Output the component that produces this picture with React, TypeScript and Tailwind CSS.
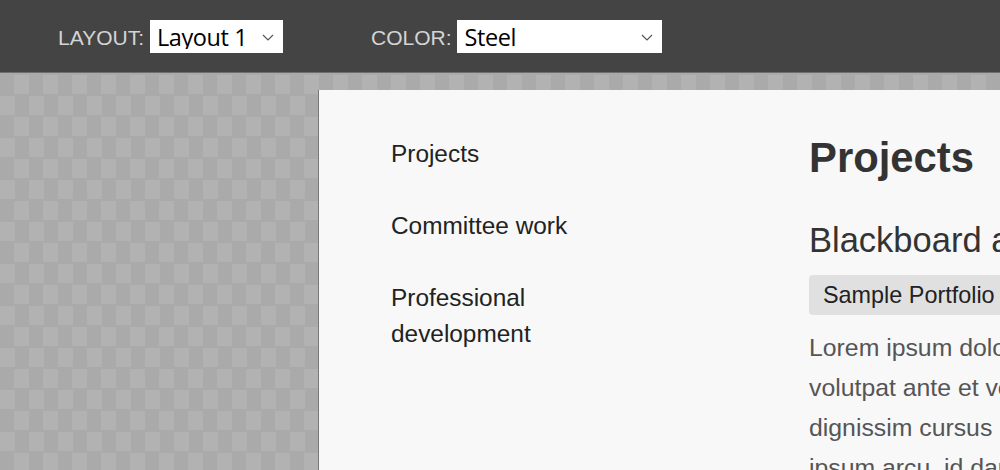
import React from "react";

const navItems = ["Projects", "Committee work", "Professional development"];

const Picker = ({ label, value, options, width }: { label: string; value: string; options: string[]; width: string }) => (
  <label className="flex items-center gap-[6px]">
    <span className="text-[21px] pt-[4px] text-[#d4d4d4]">{label}</span>
    <span className={`relative block h-[33px] ${width}`}>
      <select
        defaultValue={value}
        className="w-full h-full appearance-none bg-white text-black pl-[7px] pt-[3px] text-[23.5px] leading-none outline-none rounded-none font-['Open_Sans',sans-serif] tracking-[-0.4px]"
      >
        {options.map((o) => (
          <option key={o}>{o}</option>
        ))}
      </select>
      <svg className="absolute right-[9px] top-[14px] pointer-events-none" width="12" height="7" viewBox="0 0 12 7" fill="none">
        <path d="M1 1l5 5 5-5" stroke="#555" strokeWidth="1.2" />
      </svg>
    </span>
  </label>
);

export default function App() {
  return (
    <div className="w-[1000px] h-[470px] overflow-hidden font-['Liberation_Sans',Arial,sans-serif] bg-[linear-gradient(180deg,#aaaaaa_2px,transparent_2px),conic-gradient(#b2b2b2_25%,#aaaaaa_0_50%,#b2b2b2_0_75%,#aaaaaa_0)] bg-[length:100%_21px,29px_42px] bg-[position:0_73px,0_73px]">
      <header className="h-[73px] bg-[#444444] border-b border-[#6e6e6e] flex items-center pl-[58px] gap-[88px]">
        <Picker label="LAYOUT:" value="Layout 1" options={["Layout 1", "Layout 2"]} width="w-[133px]" />
        <Picker label="COLOR:" value="Steel" options={["Steel", "Sand", "Forest"]} width="w-[205px]" />
      </header>
      <div className="pt-[17px] pl-[318px]">
        <div className="w-[1000px] h-[400px] bg-[#f8f8f8] border-l border-[#777777] flex pt-[46px] pl-[72px]">
          <nav className="w-[418px] shrink-0 flex flex-col gap-[36px] text-[24.4px] leading-[36px] text-[#222222]">
            {navItems.map((item) => (
              <a key={item} className="block w-[200px]">
                {item}
              </a>
            ))}
          </nav>
          <main className="text-[#333333] -mt-[2px] whitespace-nowrap">
            <h1 className="text-[41.8px] font-bold leading-[48px] mb-[36px]">Projects</h1>
            <h2 className="text-[34.5px] leading-[44px] mb-[13px]">Blackboard and course design</h2>
            <div className="inline-block bg-[#e0e0e0] rounded-[4px] px-[14px] h-[40px] leading-[40px] text-[23.4px] text-[#222222]">
              Sample Portfolio Project
            </div>
            <p className="text-[24.8px] leading-[40px] text-[#555555] mt-[13px]">
              Lorem ipsum dolor sit amet, consectetur
              <br />
              volutpat ante et vestibulum tempor
              <br />
              dignissim cursus ligula sed
              <br />
              ipsum arcu, id dapibus
            </p>
          </main>
        </div>
      </div>
    </div>
  );
}
